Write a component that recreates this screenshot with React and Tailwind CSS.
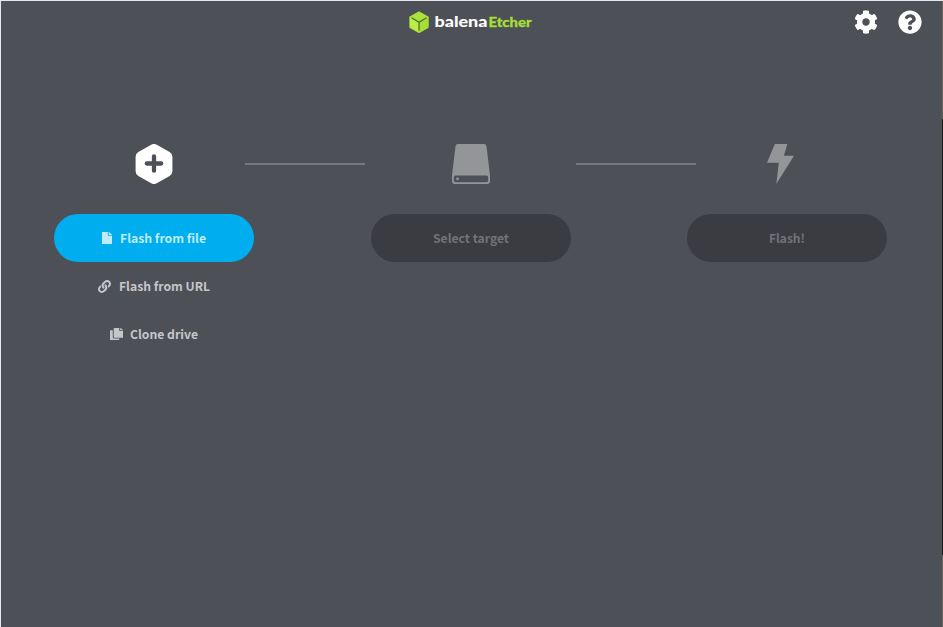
import { FaCog, FaCopy, FaFile, FaLink, FaQuestionCircle } from "react-icons/fa";

function Logo() {
  return (
    <div className="flex h-6 items-center">
      <svg className="h-[22px] w-5 shrink-0" viewBox="0 0 20 22">
        <path d="M10 1 19 6v10.3L10 21.300 1 16.300V6z" fill="#a5de37" stroke="#a5de37" strokeWidth="1.400" strokeLinejoin="round" />
        <path d="M1 6.300 10 11.300V21L1 16.300z" fill="#b8ee45" />
        <path d="M10 1 19 6 10 11.200 1 6z" fill="#a9e23a" />
        <path d="M2.500 6.800 10 11.200 17.500 6.800M10 11.200v8.600" fill="none" stroke="#4a6a2c" strokeWidth="1.200" />
      </svg>
      <svg className="h-6 w-[104px] shrink-0" viewBox="0 0 104 24">
        <g className="font-['Lato',sans-serif] font-black">
          <text className="text-[14.5px]" x="5.500" y="16.500" fill="#fff" textLength="53" lengthAdjust="spacingAndGlyphs">balena</text>
          <text className="text-[14px]" x="59.500" y="16.500" fill="#a5de37" stroke="#a5de37" strokeWidth=".3" textLength="43" lengthAdjust="spacingAndGlyphs">Etcher</text>
        </g>
      </svg>
    </div>
  );
}

function Hexagon() {
  return (
    <svg className="h-10 w-[38px]" viewBox="0 0 38 40">
      <path d="M16.200.8a5.500 5.500 0 0 1 5.600 0l12.800 7.100a5.500 5.500 0 0 1 2.800 4.800v14.600a5.500 5.500 0 0 1-2.800 4.800l-12.800 7.100a5.500 5.500 0 0 1-5.600 0L3.400 32.100a5.500 5.500 0 0 1-2.800-4.800V12.700a5.500 5.500 0 0 1 2.800-4.800z" fill="#fff" />
      <path d="M19 12.300v14.400M11.800 19.500h14.400" stroke="#4d5057" strokeWidth="4.300" strokeLinecap="round" />
    </svg>
  );
}

function Drive() {
  return (
    <svg className="h-10 w-[38px]" viewBox="0 0 38 40">
      <path fillRule="evenodd" fill="#949598" d="M6 0h26q2.200 0 2.500 2.300L38 31v6q0 3-3 3H3q-3 0-3-3v-6L3.500 2.300Q3.800 0 6 0zM3.500 31.500q-1.700 0-1.700 1.700v3.300q0 1.700 1.700 1.700h31q1.700 0 1.700-1.700v-3.300q0-1.700-1.700-1.700z" />
      <circle cx="5.500" cy="34.800" r="1.400" fill="#949598" />
    </svg>
  );
}

function Bolt() {
  return (
    <svg className="h-10 w-[27px]" viewBox="0 0 27 40">
      <path fill="#949598" d="M7.800 0h12.600l-3.500 11.700H27L9.300 40l2.500-21.300H0z" />
    </svg>
  );
}

function Label({ children, width }) {
  return (
    <svg className="h-5 shrink-0 overflow-visible font-['Noto_Sans_CJK_SC',sans-serif] text-[12.2px] font-bold" style={{ width }}>
      <text x="0" y="14.500" fill="currentColor" textLength={width} lengthAdjust="spacingAndGlyphs">
        {children}
      </text>
    </svg>
  );
}

function DisabledButton({ children, width }) {
  return (
    <button className="flex h-12 w-[200px] items-center justify-center rounded-full bg-[#3a3c41] text-[#717378]" disabled>
      <Label width={width}>{children}</Label>
    </button>
  );
}

function Connector() {
  return <div className="mt-[19px] h-0.5 w-[120px] shrink-0 bg-[#75787a]" />;
}

export default function App() {
  return (
    <div className="flex h-[627px] w-[943px] overflow-hidden border-t border-l border-[#e4eaec] bg-[#4d5057]">
      <div className="flex min-w-0 flex-1 flex-col">
        <header className="grid h-[42px] grid-cols-[1fr_auto_1fr] items-center">
          <span />
          <div className="-ml-px"><Logo /></div>
          <div className="flex justify-end gap-5 pr-5 text-white">
            <FaCog size={24} />
            <FaQuestionCircle size={24} />
          </div>
        </header>
        <main className="flex pt-[101px] pl-[53px]">
          <section className="flex w-[200px] flex-col items-center">
            <div className="h-[70px]"><Hexagon /></div>
            <button className="flex h-12 w-[200px] items-center justify-center gap-2 rounded-full bg-[#00aeef] text-[#bfebfb]">
              <FaFile className="h-3 w-2.5" preserveAspectRatio="none" />
              <Label width={86}>Flash from file</Label>
            </button>
            <button className="flex h-12 items-center justify-center gap-2 text-[#c5c6c9]">
              <FaLink size={13} />
              <Label width={91}>Flash from URL</Label>
            </button>
            <button className="flex h-12 items-center justify-center gap-[7px] text-[#c5c6c9]">
              <FaCopy className="h-3 w-[13px]" preserveAspectRatio="none" />
              <Label width={68}>Clone drive</Label>
            </button>
          </section>
          <div className="-ml-[9px]"><Connector /></div>
          <section className="ml-1.5 flex w-[200px] flex-col items-center">
            <div className="h-[70px]"><Drive /></div>
            <DisabledButton width={76}>Select target</DisabledButton>
          </section>
          <div className="ml-[5px]"><Connector /></div>
          <section className="-ml-[9px] flex w-[200px] flex-col items-center">
            <div className="mr-[13px] h-[70px]"><Bolt /></div>
            <DisabledButton width={36}>Flash!</DisabledButton>
          </section>
        </main>
      </div>
      <div className="w-px bg-[#65605f] pt-[118px]">
        <div className="h-[436px] bg-[#1d1f20]" />
      </div>
    </div>
  );
}
